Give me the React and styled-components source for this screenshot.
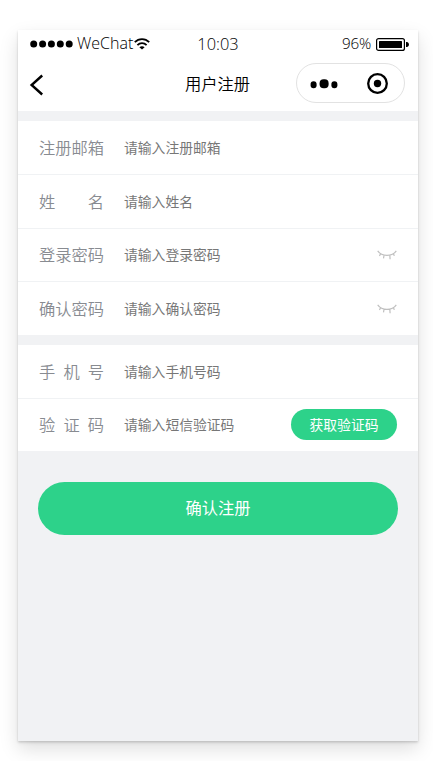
import React from 'react';
import styled, { createGlobalStyle } from 'styled-components';

const GlobalStyle = createGlobalStyle`
    * {
        box-sizing: border-box;
    }
    body {
        margin: 0;
        background: #fff;
        font-family: 'Open Sans', 'Noto Sans CJK SC', sans-serif;
    }
    button, input {
        font-family: inherit;
        border: none;
        outline: none;
        padding: 0;
    }
`;

const Page = styled.div`
    width: 433px;
    height: 761px;
    padding: 30px 15px 20px 18px;
    overflow: hidden;
`;

const Phone = styled.main`
    width: 400px;
    height: 711px;
    background-color: #f1f2f4;
    box-shadow: 0 1px 2px rgba(0, 0, 0, 0.1), 0 2px 3px rgba(0, 0, 0, 0.09), 0 8px 18px rgba(0, 0, 0, 0.13);
`;

const StatusBar = styled.div`
    display: grid;
    grid-template-columns: 1fr auto 1fr;
    align-items: center;
    height: 27px;
    padding: 0 9px 0 12px;
    background-color: #fff;
    color: #000;
    font-size: 16px;
    font-weight: 300;
    line-height: 27px;
`;

const Signal = styled.div`
    display: flex;
    align-items: center;
    svg {
        flex: none;
    }
`;

const Carrier = styled.span`
    width: 57px;
    margin-left: 4px;
    white-space: nowrap;
`;

const Time = styled.span`
    margin-left: -3px;
    font-size: 16.4px;
`;

const Power = styled.div`
    display: flex;
    align-items: center;
    justify-content: flex-end;
    gap: 5px;
    font-size: 15.2px;
    letter-spacing: -0.2px;
    svg {
        margin-top: 2px;
    }
`;

const NavBar = styled.header`
    display: grid;
    grid-template-columns: 1fr auto 1fr;
    align-items: center;
    height: 54px;
    padding: 0 13px 0 11px;
    background-color: #fff;
`;

const BackButton = styled.button`
    display: flex;
    width: 16px;
    margin-top: 1px;
    background: none;
`;

const Title = styled.h1`
    margin: 0 0 0 1px;
    color: #000;
    font-size: 16.3px;
    font-weight: 350;
    line-height: 24px;
`;

const Capsule = styled.div`
    display: flex;
    align-items: center;
    justify-content: space-between;
    justify-self: end;
    width: 109px;
    height: 40px;
    margin-top: -2px;
    padding: 0 16px 0 13px;
    border: 1px solid #e2e2e2;
    border-radius: 20px;
`;

const Group = styled.section`
    margin-top: 10px;
    background-color: #fff;
`;

const Row = styled.div`
    display: flex;
    align-items: center;
    height: ${(props) => props.$height}px;
    padding: 0 21px;
    border-bottom: ${(props) => (props.$last ? 'none' : '1px solid #f0f2f4')};
`;

const Label = styled.label`
    display: flex;
    justify-content: space-between;
    width: 65px;
    margin-right: 20px;
    color: #888b91;
    font-size: 16.25px;
    font-weight: 350;
    line-height: 24px;
`;

const Input = styled.input`
    flex: 1;
    min-width: 0;
    height: 24px;
    margin-top: -1px;
    background: none;
    font-size: 13.8px;
    &::placeholder {
        color: #777;
        opacity: 1;
    }
`;

const CodeButton = styled.button`
    width: 106px;
    height: 31px;
    margin-top: -2px;
    border-radius: 16px;
    background-color: #2dd28a;
    color: #fff;
    font-size: 13.8px;
    line-height: 31px;
`;

const SubmitButton = styled.button`
    display: block;
    width: 360px;
    height: 53px;
    margin: 31px auto 0;
    padding-bottom: 3px;
    border-radius: 27px;
    background-color: #2dd28a;
    color: #fff;
    font-size: 16.25px;
`;

const ClosedEyeIcon = () => (
    <svg width='20' height='12' viewBox='0 0 20 12' fill='none' stroke='#bfbfbf' strokeWidth='1.2'>
        <path d='M.7 1.8C5 7.9 15 7.9 19.3 1.8M3.8 4.7 2.4 6.8M7.1 6 6.5 9.4M12.8 6l.3 4.3M16.4 4.5l.9 2.4' />
    </svg>
);

const SignalIcon = () => (
    <svg width='43' height='8' viewBox='0 0 43 8'>
        {[3.7, 12.6, 21.4, 30.3, 39.2].map((x) => (
            <circle key={x} cx={x} cy='4' r='3.5' />
        ))}
    </svg>
);

const WifiIcon = () => (
    <svg width='16' height='12' viewBox='0 0 16 12' fill='none' stroke='#000' strokeWidth='1.8'>
        <path d='M.8 4.2C4.8.1 11.2.1 15.2 4.2M3.4 7.1c2.6-2.6 6.6-2.6 9.2 0' />
        <path d='M8 11.6 5.4 9.3c1.5-1.3 3.7-1.3 5.2 0z' fill='#000' stroke='none' />
    </svg>
);

const BatteryIcon = () => (
    <svg width='33' height='13' viewBox='0 0 33 13'>
        <rect x='.6' y='.6' width='27.8' height='11.8' rx='2' fill='none' stroke='#000' strokeWidth='1.2' />
        <rect x='3' y='3' width='23' height='7' rx='.6' />
        <path d='M30 4h1.2Q33 4.8 33 6.5T31.2 9H30z' />
    </svg>
);

const BackIcon = () => (
    <svg width='16' height='22' viewBox='0 0 16 22' fill='none' stroke='#000' strokeWidth='2.4'>
        <path d='M13.2 1.5 2.6 11l10.6 9.5' />
    </svg>
);

const MoreIcon = () => (
    <svg width='28' height='11' viewBox='0 0 28 11'>
        <rect x='.6' y='3.2' width='6' height='7' rx='2.9' />
        <rect x='9.6' y='1.2' width='9' height='9' rx='4' />
        <rect x='21.4' y='3.2' width='6' height='7' rx='2.9' />
    </svg>
);

const TargetIcon = () => (
    <svg width='21' height='21' viewBox='0 0 21 21'>
        <circle cx='10.5' cy='10.5' r='9.3' fill='none' stroke='#000' strokeWidth='2.3' />
        <circle cx='10.5' cy='10.5' r='3.7' />
    </svg>
);

const accountFields = [
    { id: 'email', label: '注册邮箱', placeholder: '请输入注册邮箱', height: 54 },
    { id: 'name', label: '姓名', placeholder: '请输入姓名', height: 54 },
    { id: 'password', label: '登录密码', placeholder: '请输入登录密码', height: 53, secret: true },
    { id: 'confirm', label: '确认密码', placeholder: '请输入确认密码', height: 53, secret: true },
];

const phoneFields = [
    { id: 'phone', label: '手机号', placeholder: '请输入手机号码', height: 54 },
    { id: 'code', label: '验证码', placeholder: '请输入短信验证码', height: 52, code: true },
];

const FieldGroup = ({ fields }) => (
    <Group>
        {fields.map((field, index) => (
            <Row key={field.id} $height={field.height} $last={index === fields.length - 1}>
                <Label htmlFor={field.id}>
                    {[...field.label].map((char) => (
                        <span key={char}>{char}</span>
                    ))}
                </Label>
                <Input id={field.id} type={field.secret ? 'password' : 'text'} placeholder={field.placeholder} />
                {field.secret && <ClosedEyeIcon />}
                {field.code && <CodeButton type='button'>获取验证码</CodeButton>}
            </Row>
        ))}
    </Group>
);

const App = () => {
    return (
        <Page>
            <GlobalStyle />
            <Phone>
                <StatusBar>
                    <Signal>
                        <SignalIcon />
                        <Carrier>WeChat</Carrier>
                        <WifiIcon />
                    </Signal>
                    <Time>10:03</Time>
                    <Power>
                        <span>96%</span>
                        <BatteryIcon />
                    </Power>
                </StatusBar>
                <NavBar>
                    <BackButton type='button' aria-label='返回'>
                        <BackIcon />
                    </BackButton>
                    <Title>用户注册</Title>
                    <Capsule>
                        <MoreIcon />
                        <TargetIcon />
                    </Capsule>
                </NavBar>
                <FieldGroup fields={accountFields} />
                <FieldGroup fields={phoneFields} />
                <SubmitButton type='button'>确认注册</SubmitButton>
            </Phone>
        </Page>
    );
};

export default App;
